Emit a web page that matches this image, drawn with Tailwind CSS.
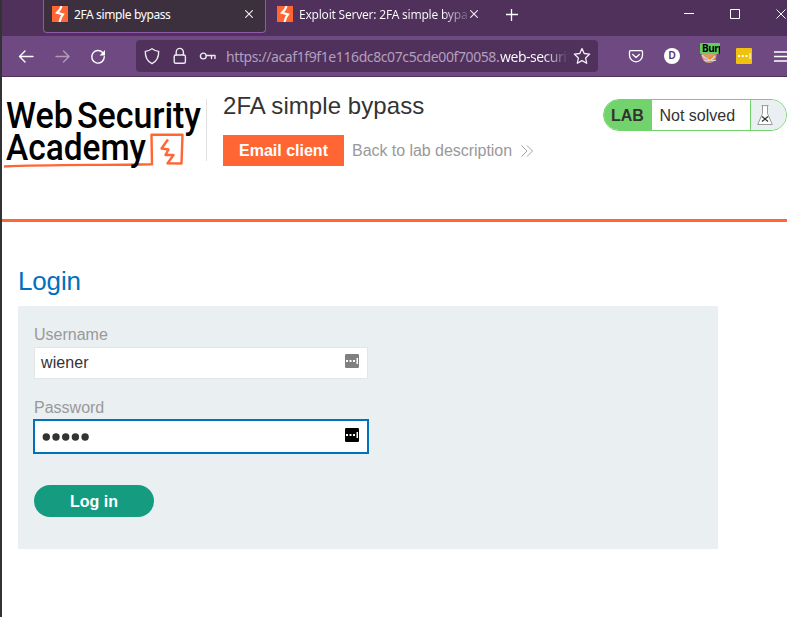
<!DOCTYPE html>
<html lang="en">
<head>
<meta charset="utf-8">
<title>2FA simple bypass</title>
<script src="https://cdn.jsdelivr.net/npm/@tailwindcss/browser@4"></script>
</head>
<body class="w-[787px] h-[617px] overflow-hidden bg-white border-l-2 border-[#333235] font-['Liberation_Sans',Arial,sans-serif]">
<div class="h-[77px] font-['Noto_Sans',sans-serif] text-white bg-[#4f315c]">
  <div class="h-9 flex items-start overflow-hidden">
    <div class="ml-[41px] w-[223px] h-[33px] flex items-start border border-t-0 border-[#9059ad] rounded-b bg-[#3c303f] pl-2">
      <svg class="mt-[6px] w-4 h-4 shrink-0" viewBox="0 0 16 16"><path fill="#ff6633" d="M0 0h16v16H0z"/><path fill="none" stroke="#fff" stroke-width="2.200" d="M9.500 0L8 3.500 5 6.800l6 1.700L9 11.500 7.500 16"/></svg>
      <span class="ml-[6px] mt-[6px] text-[12px] leading-[18px] w-[171px] whitespace-nowrap tracking-[-0.38px]">2FA simple bypass</span>
      <svg class="mt-[10px] w-2 h-2 shrink-0" viewBox="0 0 8 8" stroke="#eee" stroke-width="1.1"><path d="M.3.3l7.4 7.4M7.700.3L.3 7.700"/></svg>
    </div>
    <svg class="ml-[11px] mt-[6px] w-4 h-4 shrink-0" viewBox="0 0 16 16"><path fill="#ff6633" d="M0 0h16v16H0z"/><path fill="none" stroke="#fff" stroke-width="2.200" d="M9.500 0L8 3.500 5 6.800l6 1.700L9 11.500 7.500 16"/></svg>
    <span class="ml-[6px] mt-[6px] w-[168px] text-[12px] leading-[18px] whitespace-nowrap overflow-hidden tracking-[-0.22px] bg-linear-to-r from-white from-85% to-white/20 bg-clip-text text-transparent">Exploit Server: 2FA simple bypass</span>
    <svg class="ml-[3px] mt-[10px] w-2 h-2 shrink-0" viewBox="0 0 8 8" stroke="#eee" stroke-width="1.1"><path d="M.3.3l7.4 7.4M7.7.3L.3 7.7"/></svg>
    <svg class="ml-[28px] mt-[9px] w-3 h-3 shrink-0" viewBox="0 0 12 12" stroke="#fff" stroke-width="1.3"><path d="M5.500 0v12M0 5.500h12"/></svg>
    <svg class="ml-[166px] mt-[9px] w-[103px] h-[11px] shrink-0" viewBox="0 0 103 11" fill="none" stroke="#fff"><path d="M0 4.500h10M46.500.500h9v9h-9zM92.500.500l9 9M101.500.500l-9 9"/></svg>
  </div>
  <div class="h-10 flex items-center bg-[#6f4a82]">
    <svg class="ml-[16px] w-[90px] h-[18px] shrink-0" viewBox="0 0 90 18" fill="none" stroke="#fff" stroke-width="1.4" stroke-linecap="round" stroke-linejoin="round"><path d="M15 9.500H1.800M7 4L1.500 9.500 7 15"/><path opacity=".45" d="M38 9.500H50.500M45.500 4l5.500 5.500-5.500 5.500"/><path d="M84.600 5.500A6.300 6.300 0 1 0 86.300 9.800"/><path d="M87 3v5.400h-5.400z" fill="#fff" stroke="none"/></svg>
    <div class="ml-[28px] w-[462px] h-8 shrink-0 rounded bg-[#4f315c] flex items-center">
      <svg class="ml-2 w-[74px] h-[18px] shrink-0" viewBox="0 0 74 18" fill="none" stroke="#eee8f0" stroke-width="1.4" stroke-linejoin="round" stroke-linecap="round"><path d="M8 1.800c2.200 1.600 4.300 2.300 6.700 2.600C14.800 10 13 14 8 16.700 3 14 1.200 10 1.300 4.400 3.700 4.100 5.800 3.400 8 1.800z"/><rect x="30.200" y="8" width="11.200" height="8.300" rx="1.500"/><path d="M32.200 8V5a3.600 3.600 0 0 1 7.200 0v3"/><circle cx="59.300" cy="9" r="2.900"/><path d="M62.500 8.500H71V11.500M67.500 8.500v3"/></svg>
      <div class="ml-2 mt-px w-[343px] overflow-hidden whitespace-nowrap text-[14px] leading-5 flex"><span class="w-[274px] shrink-0 text-[#b39fbd] tracking-[-0.4px]">https://acaf1f9f1e116dc8c07c5cde00f70058.</span><span class="w-[69px] overflow-hidden tracking-[-0.5px] bg-linear-to-r from-white from-62% to-white/0 bg-clip-text text-transparent">web-security-academy.net</span></div>
      <svg class="ml-[4px] w-[18px] h-[18px] shrink-0" viewBox="0 0 18 18" fill="none" stroke="#f4edf7" stroke-width="1.3" stroke-linejoin="round"><path d="M9 1.500l2.200 5 5.500.600-4.100 3.800 1.100 5.400L9 13.600l-4.700 2.700 1.100-5.400-4.100-3.800 5.500-.600z"/></svg>
    </div>
    <svg class="ml-[30px] w-4 h-4 shrink-0" viewBox="0 0 16 16" fill="none" stroke="#fff" stroke-width="1.3" stroke-linecap="round" stroke-linejoin="round"><path d="M2.500 2.700h11a1 1 0 0 1 1 1v3.600a6.500 6.500 0 0 1-13 0V3.700a1 1 0 0 1 1-1z"/><path d="M4.700 6.500L8 9.500l3.300-3"/></svg>
    <div class="ml-[20px] w-4 h-4 shrink-0 rounded-full bg-white text-[#5e3b70] text-[10px] leading-4 text-center font-bold font-['Liberation_Sans',sans-serif]">D</div>
    <div class="relative ml-[20px] w-5 h-5 shrink-0">
      <svg class="w-5 h-5" viewBox="0 0 20 20"><circle cx="9" cy="9.500" r="7.500" fill="#d99b70"/><path d="M3 8l5 4 8-4v4l-4 4H7z" fill="#f08a24"/><path d="M2 9c3 4 11 7 14 5M4 14c4 2 7 1 11-4" stroke="#d9d4df" stroke-width="1.300" fill="none"/></svg>
      <span class="absolute left-0 -top-[3px] w-5 h-[11px] overflow-hidden bg-[#63cf62] rounded-[1px] pl-[2px] text-black text-[10px] leading-[11px] font-bold tracking-[-0.5px]">Burp</span>
    </div>
    <svg class="ml-[16px] w-4 h-4 shrink-0" viewBox="0 0 16 16"><rect width="16" height="16" rx="1" fill="#f0c20f"/><path fill="#fff" d="M2 7h2v2H2zM5.700 7h2v2h-2zM9.400 7h2v2h-2zM13.500 5h1v6h-1z"/></svg>
    <svg class="ml-[22px] w-[13px] h-[11px] shrink-0" viewBox="0 0 13 11" stroke="#fff" stroke-width="1.300"><path d="M0 1h13M0 5.500h13M0 10h13"/></svg>
  </div>
</div>
<header class="h-[145px] flex border-b-[3px] border-[#ff6633]">
  <svg class="mt-[13px] w-[204px] h-[85px] shrink-0" viewBox="2 90 204 85" font-family="Roboto, sans-serif" font-size="37.500" font-weight="500">
    <text x="6" y="127.500" textLength="67" lengthAdjust="spacingAndGlyphs">Web</text><text x="77" y="127.500" textLength="124" lengthAdjust="spacingAndGlyphs">Security</text>
    <path d="M4 166.500C50 164.500 100 165.300 152 164.200L151.500 134.600 182.500 134.800 181.500 163.500 167.500 163.400 173.500 155H165.500L168.500 149.500 161.500 148.500 168 139.500" fill="none" stroke="#ff6633" stroke-width="2.400" stroke-linejoin="round"/>
    <text x="6" y="160" textLength="140" lengthAdjust="spacingAndGlyphs">Academy</text>
  </svg>
  <div class="mt-[22px] h-[62px] w-px bg-[#e2e2e2]"></div>
  <div class="ml-4 mt-[14px] flex-1">
    <h1 class="text-[24px] leading-[30px] text-[#333332] tracking-[0.07px]">2FA simple bypass</h1>
    <div class="mt-[14px] flex items-center">
      <button class="w-[121px] h-[31px] bg-[#ff6633] text-white font-bold text-[16px] leading-[31px]">Email client</button>
      <a class="ml-2 text-[16px] text-[#999] whitespace-nowrap tracking-[-0.04px]">Back to lab description</a>
      <svg class="ml-[9px] w-3 h-3" viewBox="0 0 12 12" fill="none" stroke="#999" stroke-width=".9"><path d="M.5.500L6 6 .5 11.500M6 .500L11.500 6 6 11.500"/></svg>
    </div>
  </div>
  <div class="mt-[22px] w-[184px] h-8 shrink-0 rounded-full border border-[#72d36d] overflow-hidden flex text-[16px] leading-8 text-[#333332]">
    <b class="w-12 bg-[#72d36d] pl-[7px]">LAB</b><span class="w-[98px] pl-[7.500px] whitespace-nowrap">Not solved</span>
    <div class="flex-1 bg-[#eaeff2] border-l border-[#72d36d] pl-[6px] pt-[5px]"><svg class="w-4 h-5" viewBox="0 0 16 20" fill="#fff" stroke="#999" stroke-width="1"><path d="M5.500.600v8L.7 19.500h14.600L10.500 8.600v-8"/><path d="M4.500.600h7"/><path d="M5 11.500l6 5M11 11.500l-6 5" stroke="#333" stroke-width="1.300"/></svg></div>
  </div>
</header>
<main class="pl-4 pt-[43px]">
  <h2 class="text-[26px] leading-8 text-[#0071bd] tracking-[-0.15px]">Login</h2>
  <form class="mt-[9px] w-[700px] h-[243px] bg-[#eaeff2] px-4 pt-5 text-[16px] leading-[18px] text-[#999]">
    <label class="block">Username</label>
    <div class="mt-[3px] w-[334px] h-8 bg-white border border-[#e3e6e7] flex items-center justify-between pl-[6px] pr-2 text-[#333332]">
      <span class="tracking-[0.1px]">wiener</span>
      <svg class="w-[14px] h-[14px] -mt-[4px]" viewBox="0 0 14 14"><rect width="14" height="14" rx="1.200" fill="#808080"/><path fill="#fff" d="M1 6h2v2H1zM4.500 6h2v2h-2zM8 6h2v2H8zM11.500 4h1.500v6h-1.500z"/></svg>
    </div>
    <label class="block mt-5">Password</label>
    <div class="mt-[2px] -ml-px w-[336px] h-[35px] bg-white border-2 border-[#0071bd] flex items-center justify-between pl-[7px] pr-2">
      <svg class="mt-px w-12 h-2" viewBox="0 0 48 8" fill="#333332"><circle cx="4.300" cy="4" r="3.700"/><circle cx="14" cy="4" r="3.700"/><circle cx="23.700" cy="4" r="3.700"/><circle cx="33.400" cy="4" r="3.700"/><circle cx="43.100" cy="4" r="3.700"/></svg>
      <svg class="w-[14px] h-[14px] -mt-[4px]" viewBox="0 0 14 14"><rect width="14" height="14" rx="1.200"/><path fill="#fff" d="M1 6h2v2H1zM4.500 6h2v2h-2zM8 6h2v2H8zM11.500 4h1.500v6h-1.500z"/></svg>
    </div>
    <button type="button" class="mt-[31px] block w-[120px] h-8 rounded-full bg-[#159c80] text-white font-bold pt-px">Log in</button>
  </form>
</main>
</body>
</html>
